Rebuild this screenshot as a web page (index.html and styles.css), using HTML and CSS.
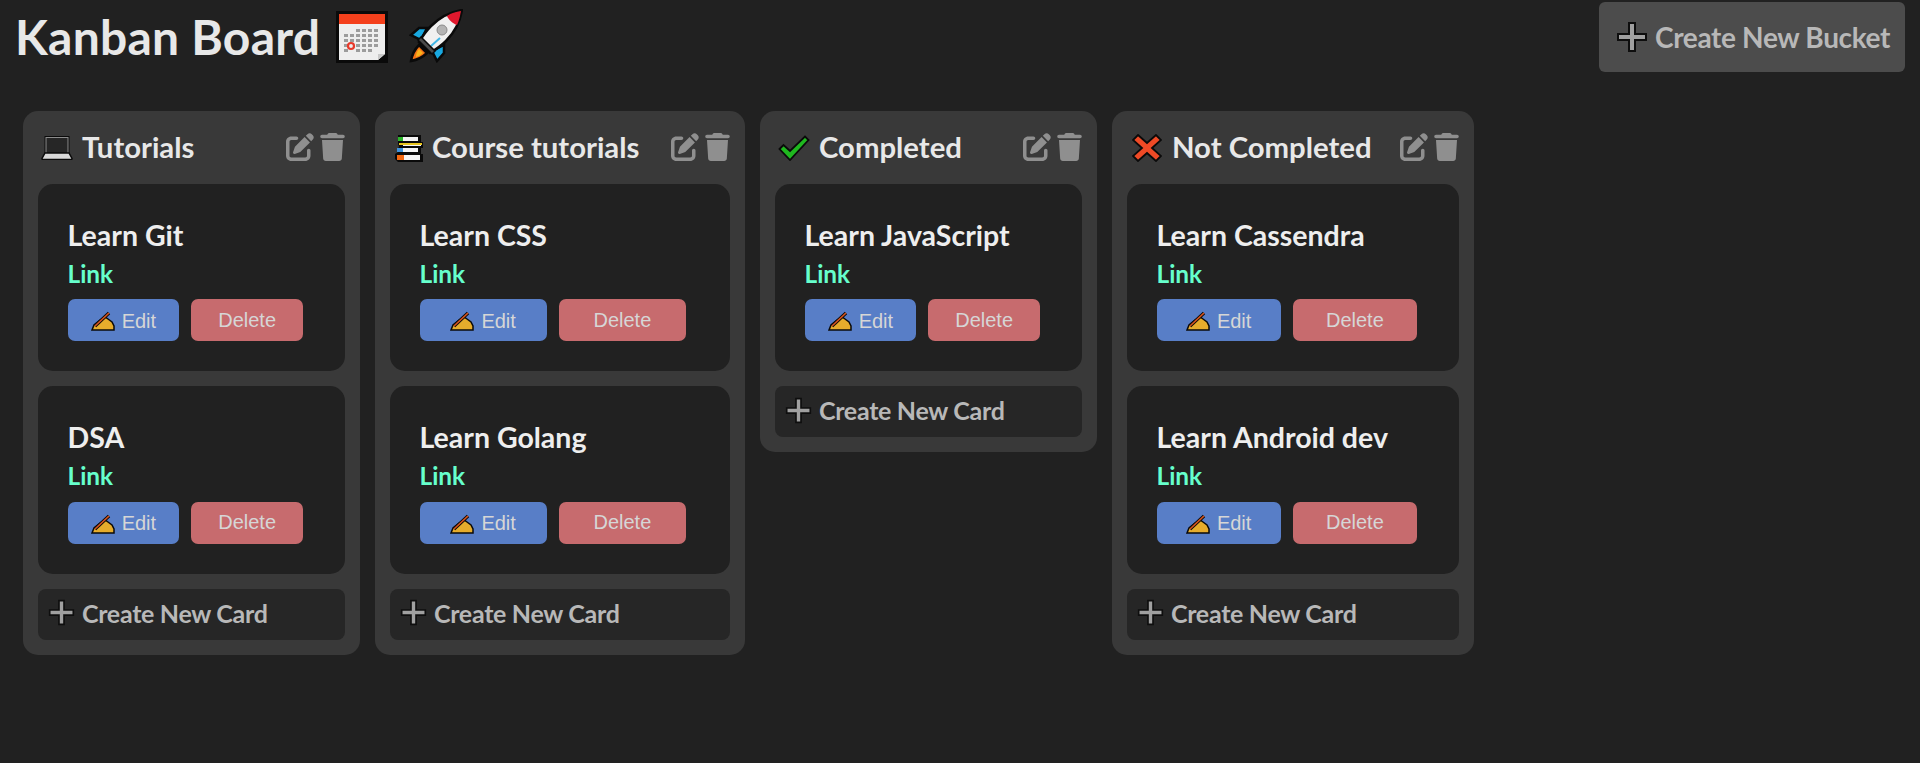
FILE: index.html
```html
<!DOCTYPE html>
<html lang="en">
<head>
    <meta charset="UTF-8">
    <meta name="viewport" content="width=device-width, initial-scale=1.0">
    <title>Kanban Board</title>
    <link rel="stylesheet" href="styles.css">
</head>
<body>
    <svg class="icon-defs" aria-hidden="true">
        <symbol id="i-edit" viewBox="0 0 512 512">
            <path fill="currentColor" d="M471.6 21.7c-21.9-21.9-57.3-21.9-79.2 0L362.3 51.7l97.9 97.9 30.1-30.1c21.9-21.9 21.9-57.3 0-79.2L471.6 21.7zm-299.2 220c-6.1 6.1-10.8 13.6-13.5 21.9l-29.6 88.8c-2.9 8.6-.6 18.1 5.8 24.6s15.9 8.7 24.6 5.8l88.8-29.6c8.2-2.7 15.7-7.4 21.9-13.5L437.7 172.3 339.7 74.3 172.4 241.7zM96 64C43 64 0 107 0 160V416c0 53 43 96 96 96H352c53 0 96-43 96-96V320c0-17.7-14.3-32-32-32s-32 14.3-32 32v96c0 17.7-14.3 32-32 32H96c-17.7 0-32-14.3-32-32V160c0-17.7 14.3-32 32-32h96c17.7 0 32-14.3 32-32s-14.3-32-32-32H96z"/>
        </symbol>
        <symbol id="i-trash" viewBox="0 0 448 512">
            <path fill="currentColor" d="M135.2 17.7L128 32H32C14.3 32 0 46.3 0 64S14.3 96 32 96H416c17.7 0 32-14.3 32-32s-14.3-32-32-32H320l-7.2-14.3C307.4 6.8 296.3 0 284.2 0H163.8c-12.1 0-23.2 6.8-28.6 17.7zM416 128H32L53.2 467c1.6 25.3 22.6 45 47.9 45H346.9c25.3 0 46.3-19.7 47.9-45L416 128z"/>
        </symbol>
        <symbol id="i-plus" viewBox="0 0 32 32">
            <path fill="#a0a0a0" stroke="#0e0e0e" stroke-width="2" d="M13 2h6v11h11v6H19v11h-6V19H2v-6h11z"/>
        </symbol>
        <symbol id="i-write" viewBox="0 0 24 20">
            <path fill="#e6ac2c" stroke="#0a0a0a" stroke-width="1.500" d="M1 19l2-5 6-5 5-3 3 2 4 3 2 4v4z"/>
            <path fill="none" stroke="#0a0a0a" stroke-width="3.400" d="M4 15L18 2"/>
            <path fill="none" stroke="#d9541e" stroke-width="1.700" d="M4 15L18 2"/>
        </symbol>
        <symbol id="i-calendar" viewBox="0 0 52 52">
            <rect x="0" y="0" width="52" height="52" fill="#0a0a0a"/>
            <path fill="#eeeeee" d="M3 13h46v30l-7 6H3z"/>
            <path fill="#f4401c" d="M3 3h46v10H3z"/>
            <path fill="#c9c9c9" d="M49 43l-7 6v-6z"/>
            <g fill="#9c9c9c">
                <path d="M20 18h4v3h-4zM26 18h4v3h-4zM32 18h4v3h-4zM38 18h4v3h-4z"/>
                <path d="M8 23h4v3H8zM14 23h4v3h-4zM20 23h4v3h-4zM26 23h4v3h-4zM32 23h4v3h-4zM38 23h4v3h-4z"/>
                <path d="M8 28h4v3H8zM14 28h4v3h-4zM20 28h4v3h-4zM26 28h4v3h-4zM32 28h4v3h-4zM38 28h4v3h-4z"/>
                <path d="M8 33h4v3H8zM20 33h4v3h-4zM26 33h4v3h-4zM32 33h4v3h-4zM38 33h4v3h-4z"/>
                <path d="M8 38h4v3H8zM20 38h4v3h-4zM26 38h4v3h-4zM32 38h4v3h-4z"/>
            </g>
            <circle cx="15" cy="35" r="3" fill="none" stroke="#e8392a" stroke-width="2.200"/>
        </symbol>
        <symbol id="i-rocket" viewBox="0 0 54 54">
            <path fill="#19a8e0" stroke="#0a0a0a" stroke-width="2.500" d="M18 19H10L2 26l10 5zM35 36v8l-7 8-5-10z"/>
            <path fill="#f0f0f0" stroke="#0a0a0a" stroke-width="2.500" d="M53 1C41 3 30 9 22 17 17 22 13 28 10 33l11 11c5-3 11-7 16-12C45 24 51 13 53 1z"/>
            <path fill="#e0182d" d="M52 2c-5 1-10 2-14 5 1 3 6 8 10 9 2-4 3-9 4-14z"/>
            <circle cx="33" cy="21" r="5" fill="#b4b4b4" stroke="#8a8a8a"/>
            <path fill="none" stroke="#3fb6e6" stroke-width="2" d="M31 29L22 37"/>
            <path fill="#4a4a4a" stroke="#0a0a0a" stroke-width="1.500" d="M12 28l14 14-3 3L9 31z"/>
            <path fill="#f47216" stroke="#0a0a0a" stroke-width="2.500" d="M10 36l8 8c-4 4-10 7-16 8 1-6 4-12 8-16z"/>
            <path fill="#f9b21a" d="M10 40l4 4c-2 2-4 3-7 4 0-3 1-6 3-8z"/>
        </symbol>
        <symbol id="i-laptop" viewBox="0 0 32 24">
            <path fill="#0a0a0a" d="M3.500 0h25v18h-25z"/>
            <path fill="#8c8c8c" d="M4.500 1h23v16h-23z"/>
            <path fill="#262626" d="M5.500 2h21v15h-21z"/>
            <path fill="#d8d8d8" stroke="#0a0a0a" stroke-width="1.500" d="M4 17h24l3 5.500a.8.8 0 0 1-.7 1H1.700a.8.8 0 0 1-.7-1z"/>
        </symbol>
        <symbol id="i-books" viewBox="0 0 28 27">
            <path fill="#0a0a0a" d="M3 0h23v7h2v6h-2v6h2v8H3l-3-3v-5l3-2-1-3 2-2-1-3z"/>
            <path fill="#2bb52b" d="M3 2h5v4H3z"/>
            <path fill="#f4f4f4" d="M8 2h15v4H8z"/>
            <path fill="#e8c51e" d="M4 8h23v2H4z"/>
            <path fill="#f4f4f4" d="M8 10h18v1H8zM8 13h15v4H8z"/>
            <path fill="#3f93dd" d="M2 13h6v4H2z"/>
            <path fill="#f4670f" d="M2 20h7v5H2z"/>
            <path fill="#f4f4f4" d="M9 20h16v5H9z"/>
        </symbol>
        <symbol id="i-check" viewBox="0 0 32 26">
            <path fill="#1fb81f" stroke="#0a0a0a" stroke-width="1.800" d="M1.500 14l4-4 6.500 6L27 1.500 30.500 5 12 25z"/>
        </symbol>
        <symbol id="i-cross" viewBox="0 0 30 28">
            <path fill="#ef4a26" stroke="#0a0a0a" stroke-width="1.800" d="M6 1l9 8 9-8 5 5-9 8 9 8-5 5-9-8-9 8-5-5 9-8-9-8z"/>
        </symbol>
    </svg>

    <header class="topbar">
        <h1 class="page-title">Kanban Board
            <svg class="title-icon"><use href="#i-calendar"/></svg>
            <svg class="title-icon rocket"><use href="#i-rocket"/></svg>
        </h1>
        <button class="new-bucket"><svg class="plus"><use href="#i-plus"/></svg>Create New Bucket</button>
    </header>

    <main class="board">
        <section class="bucket w-tutorials">
            <div class="bucket-head">
                <svg class="head-icon laptop"><use href="#i-laptop"/></svg>
                <h2>Tutorials</h2>
                <svg class="tool"><use href="#i-edit"/></svg>
                <svg class="tool bin"><use href="#i-trash"/></svg>
            </div>
            <article class="card">
                <h3>Learn Git</h3>
                <a href="#">Link</a>
                <div class="card-btns">
                    <button class="btn edit"><svg class="write"><use href="#i-write"/></svg>Edit</button>
                    <button class="btn delete">Delete</button>
                </div>
            </article>
            <article class="card">
                <h3>DSA</h3>
                <a href="#">Link</a>
                <div class="card-btns">
                    <button class="btn edit"><svg class="write"><use href="#i-write"/></svg>Edit</button>
                    <button class="btn delete">Delete</button>
                </div>
            </article>
            <button class="new-card"><svg class="plus"><use href="#i-plus"/></svg>Create New Card</button>
        </section>

        <section class="bucket w-course">
            <div class="bucket-head">
                <svg class="head-icon books"><use href="#i-books"/></svg>
                <h2>Course tutorials</h2>
                <svg class="tool"><use href="#i-edit"/></svg>
                <svg class="tool bin"><use href="#i-trash"/></svg>
            </div>
            <article class="card">
                <h3>Learn CSS</h3>
                <a href="#">Link</a>
                <div class="card-btns">
                    <button class="btn edit"><svg class="write"><use href="#i-write"/></svg>Edit</button>
                    <button class="btn delete">Delete</button>
                </div>
            </article>
            <article class="card">
                <h3>Learn Golang</h3>
                <a href="#">Link</a>
                <div class="card-btns">
                    <button class="btn edit"><svg class="write"><use href="#i-write"/></svg>Edit</button>
                    <button class="btn delete">Delete</button>
                </div>
            </article>
            <button class="new-card"><svg class="plus"><use href="#i-plus"/></svg>Create New Card</button>
        </section>

        <section class="bucket w-tutorials">
            <div class="bucket-head">
                <svg class="head-icon check"><use href="#i-check"/></svg>
                <h2>Completed</h2>
                <svg class="tool"><use href="#i-edit"/></svg>
                <svg class="tool bin"><use href="#i-trash"/></svg>
            </div>
            <article class="card">
                <h3>Learn JavaScript</h3>
                <a href="#">Link</a>
                <div class="card-btns">
                    <button class="btn edit"><svg class="write"><use href="#i-write"/></svg>Edit</button>
                    <button class="btn delete">Delete</button>
                </div>
            </article>
            <button class="new-card"><svg class="plus"><use href="#i-plus"/></svg>Create New Card</button>
        </section>

        <section class="bucket w-not">
            <div class="bucket-head">
                <svg class="head-icon cross"><use href="#i-cross"/></svg>
                <h2>Not Completed</h2>
                <svg class="tool"><use href="#i-edit"/></svg>
                <svg class="tool bin"><use href="#i-trash"/></svg>
            </div>
            <article class="card">
                <h3>Learn Cassendra</h3>
                <a href="#">Link</a>
                <div class="card-btns">
                    <button class="btn edit"><svg class="write"><use href="#i-write"/></svg>Edit</button>
                    <button class="btn delete">Delete</button>
                </div>
            </article>
            <article class="card">
                <h3>Learn Android dev</h3>
                <a href="#">Link</a>
                <div class="card-btns">
                    <button class="btn edit"><svg class="write"><use href="#i-write"/></svg>Edit</button>
                    <button class="btn delete">Delete</button>
                </div>
            </article>
            <button class="new-card"><svg class="plus"><use href="#i-plus"/></svg>Create New Card</button>
        </section>
    </main>
</body>
</html>
```

FILE: styles.css
```css
body {
    font-family: Lato, "Open Sans", sans-serif;
    background-color: #212121;
    color: #e8e8e8;
    margin: 0;
    height: 763px;
    overflow: hidden;
}
.icon-defs {
    display: none;
}
.topbar {
    display: flex;
    justify-content: space-between;
    align-items: flex-start;
    height: 111px;
    padding: 1px 15px 0 15px;
    box-sizing: border-box;
}
.page-title {
    display: flex;
    align-items: center;
    font-size: 48px;
    font-weight: 700;
    letter-spacing: 0.25px;
    line-height: 72px;
    margin: 0;
    white-space: nowrap;
}
.title-icon {
    width: 52px;
    height: 52px;
    margin-left: 16px;
    margin-top: 0;
}
.title-icon.rocket {
    width: 54px;
    height: 54px;
    margin-left: 21px;
    margin-top: -2px;
}
.new-bucket {
    display: flex;
    align-items: center;
    width: 306px;
    height: 70px;
    margin-top: 1px;
    padding: 0 0 0 17px;
    background: #4c4c4c;
    color: #b8b8b8;
    font-family: inherit;
    font-size: 28px;
    font-weight: 700;
    letter-spacing: -0.35px;
    border: none;
    border-radius: 6px;
    white-space: nowrap;
}
.new-bucket .plus {
    width: 32px;
    height: 32px;
    margin-right: 7px;
}
.board {
    display: flex;
    align-items: flex-start;
    gap: 15px;
    padding-left: 23px;
}
.bucket {
    background: #393939;
    border-radius: 15px;
    padding: 0 15px 15px;
    box-sizing: border-box;
}
.w-tutorials {
    width: 337px;
}
.w-course {
    width: 370px;
}
.w-course .card {
    padding-right: 44px;
}
.w-not {
    width: 362px;
}
.bucket-head {
    display: flex;
    align-items: center;
    height: 73px;
    padding-top: 1px;
    box-sizing: border-box;
}
.bucket-head h2 {
    flex: 1;
    font-size: 29.3px;
    font-weight: 700;
    line-height: 36px;
    margin: -3px 0 0;
    white-space: nowrap;
}
.head-icon {
    flex: none;
    margin-right: 9px;
}
.laptop {
    width: 32px;
    height: 24px;
    margin-left: 3px;
}
.books {
    width: 28px;
    height: 27px;
    margin-left: 5px;
}
.check {
    width: 32px;
    height: 26px;
    margin-left: 3px;
}
.cross {
    width: 30px;
    height: 28px;
    margin-left: 5px;
    margin-right: 10px;
}
.tool {
    flex: none;
    width: 28px;
    height: 28px;
    color: #8f8f8f;
    margin-top: -2px;
}
.tool.bin {
    width: 25px;
    margin-left: 6px;
}
.card {
    background: #212121;
    border-radius: 15px;
    height: 187.4px;
    padding: 33px 42px 0 29.5px;
    box-sizing: border-box;
    margin-bottom: 15px;
}
.card h3 {
    font-size: 28.5px;
    font-weight: 700;
    line-height: 36px;
    margin: 0 0 1px;
    color: #eeeeee;
    white-space: nowrap;
}
.card a {
    display: block;
    font-size: 24.4px;
    font-weight: 700;
    line-height: 40px;
    color: #66ffcc;
    text-decoration: none;
}
.card-btns {
    display: flex;
    gap: 12px;
    margin-top: 5.4px;
}
.btn {
    flex: 1;
    display: flex;
    align-items: center;
    justify-content: center;
    height: 42px;
    padding: 0;
    border: none;
    border-radius: 7px;
    font-family: "Liberation Sans", Arial, sans-serif;
    font-size: 20px;
    color: #d6d6d6;
}
.edit {
    background: #587ec7;
    padding-top: 2px;
}
.delete {
    background: #c76b6e;
}
.write {
    width: 24px;
    height: 20px;
    margin-right: 7px;
}
.new-card {
    display: flex;
    align-items: center;
    width: 100%;
    height: 51px;
    padding: 0 0 3px 10px;
    background: #262626;
    color: #b8b8b8;
    font-family: inherit;
    font-size: 25px;
    font-weight: 700;
    letter-spacing: -0.3px;
    border: none;
    border-radius: 8px;
    white-space: nowrap;
}
.new-card .plus {
    width: 27px;
    height: 27px;
    margin-right: 7px;
}
```
